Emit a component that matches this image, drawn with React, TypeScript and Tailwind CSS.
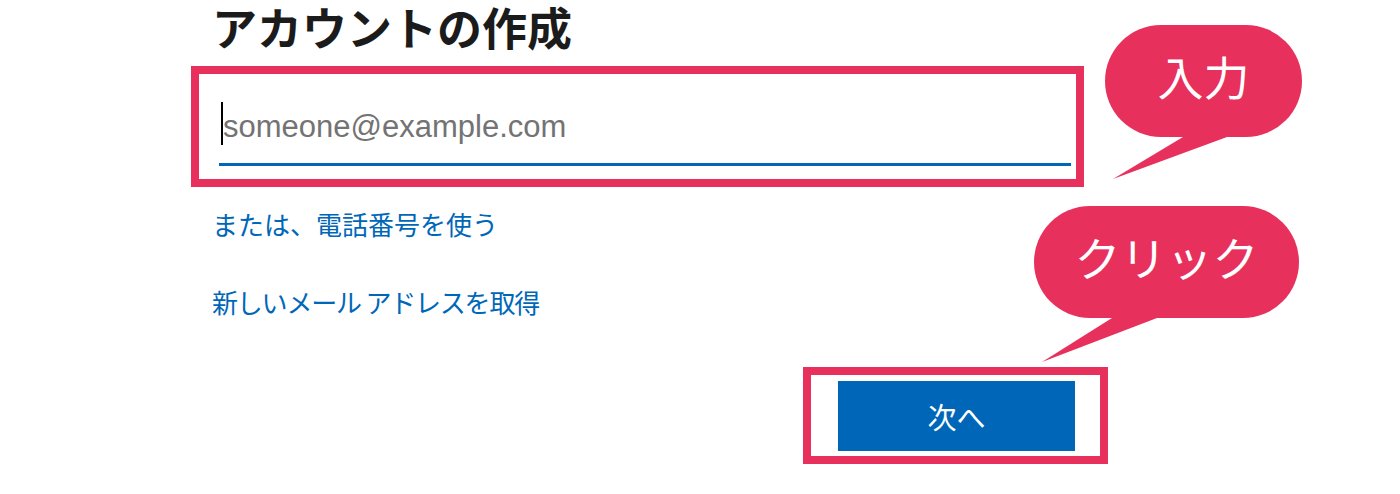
import React from 'react';

const jp = { fontFamily: '"Noto Sans CJK JP", "Noto Sans", sans-serif' };

// Callout bubble with a pointed tail
const Bubble = ({
  label,
  className,
  width,
  tail,
}: {
  label: string;
  className: string;
  width: string;
  tail: string;
}) => {
  return (
    <div className={`absolute ${className}`}>
      <div
        className={`${width} h-[112px] rounded-full bg-[#e8305c] flex items-center justify-center pb-[12px]`}
      >
        <span className="text-white text-[46px] leading-none font-normal" style={jp}>
          {label}
        </span>
      </div>
      <svg className="absolute left-0 top-[112px]" viewBox="0 0 200 60" width="200" height="60">
        <polygon points={tail} fill="#e8305c" />
      </svg>
    </div>
  );
};

const App = () => {
  return (
    <div className="relative w-[1400px] h-[494px] bg-white overflow-hidden">
      <div className="ml-[191px] w-[917px] flex flex-col">
        {/* Title */}
        <h1
          className="ml-[21px] mt-[1px] text-[45px] leading-[52px] font-bold text-[#1b1b1b]"
          style={jp}
        >
          アカウントの作成
        </h1>

        {/* Email field, highlighted */}
        <div className="mt-[13px] w-[893px] h-[121px] border-[8px] border-[#e8305c] pl-[20px] pr-[5px] pt-[28px]">
          <div className="flex items-start pl-[2px] h-[43px]">
            <span className="w-[2px] h-[43px] bg-black shrink-0" />
            <span
              className="mt-[7px] text-[31px] leading-[35px] text-[#737373]"
              style={{ fontFamily: '"Liberation Sans", Arial, sans-serif' }}
            >
              someone@example.com
            </span>
          </div>
          <div className="mt-[18px] h-[3px] bg-[#0067b8]" />
        </div>

        {/* Links */}
        <a className="ml-[21px] mt-[24px] text-[26px] leading-none text-[#0067b8]" style={jp}>
          または、電話番号を使う
        </a>
        <a
          className="ml-[21px] mt-[52px] text-[26px] leading-none tracking-[-1.2px] text-[#0067b8]"
          style={jp}
        >
          新しいメール アドレスを取得
        </a>

        {/* Next button, highlighted */}
        <div className="ml-[612px] mt-[52px] w-[305px] h-[97px] border-[8px] border-[#e8305c] pl-[27px] pt-[6px]">
          <button
            className="w-[237px] h-[70px] bg-[#0067b8] text-white text-[29px] leading-none flex items-center justify-center"
            style={jp}
          >
            次へ
          </button>
        </div>
      </div>

      {/* Callouts */}
      <Bubble
        label="入力"
        className="left-[1105px] top-[25px]"
        width="w-[197px]"
        tail="78,0 122,0 8,42"
      />
      <Bubble
        label="クリック"
        className="left-[1034px] top-[206px]"
        width="w-[265px]"
        tail="78,0 123,0 8,44"
      />
    </div>
  );
};

export default App;
